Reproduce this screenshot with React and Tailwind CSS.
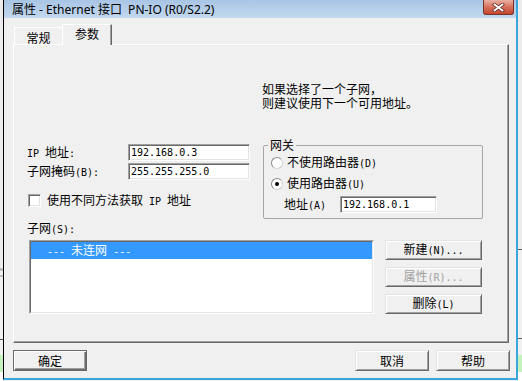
import React from "react";

// half-width latin text, close to the 6px advance of the old bitmap font
const M = ({ children }) => (
  <span className="font-['DejaVu_Sans_Mono',monospace] text-[10px]">{children}</span>
);

const sunken =
  "border border-t-[#a0a0a0] border-l-[#a0a0a0] border-b-white border-r-white shadow-[inset_1px_1px_0_#696969,inset_-1px_-1px_0_#e3e3e3]";

const Field = ({ value, className }) => (
  <div className={`h-[17px] bg-white flex items-center pl-[2px] ${sunken} ${className}`}>
    <M>{value}</M>
  </div>
);

const Btn = ({ children, disabled, className }) => (
  <div
    className={`flex items-center justify-center bg-[#f0f0f0] border border-t-[#e3e3e3] border-l-[#e3e3e3] border-b-[#696969] border-r-[#696969] shadow-[inset_1px_1px_0_white,inset_-1px_-1px_0_#a0a0a0] ${
      disabled ? "text-[#a0a0a0]" : "text-black"
    } ${className}`}
  >
    <span>{children}</span>
  </div>
);

const Radio = ({ checked }) => (
  <div className="w-[12px] h-[12px] rounded-full bg-white border border-t-[#8a8a8a] border-l-[#8a8a8a] border-b-[#d0d0d0] border-r-[#d0d0d0] flex items-center justify-center">
    {checked && <div className="w-[4px] h-[4px] rounded-full bg-black" />}
  </div>
);

export default function App() {
  return (
    <div className="w-[522px] h-[381px] overflow-hidden flex bg-[#f0f0f0] font-['Noto_Sans_CJK_SC',sans-serif] text-[12px] leading-[12px] text-black">
      {/* part of the window behind, left */}
      <div className="w-[3px] flex flex-col">
        <div className="h-[268px] bg-[#ececec]" />
        <div className="h-[3px] bg-[#bdbdbd]" />
        <div className="h-[4px]" />
        <div className="h-[2px] bg-[#bdbdbd]" />
        <div className="h-[62px]" />
        <div className="h-px bg-[#505050]" />
        <div className="h-[15px]" />
        <div className="h-[17px] bg-[#c4f2bc]" />
        <div className="flex-1 bg-white" />
      </div>

      {/* dialog */}
      <div className="w-[515px] h-[380px] flex flex-col border-l border-l-black border-r-2 border-r-[#3aa6de] border-b-2 border-b-[#3aa6de]">
        {/* title bar */}
        <div className="h-[18px] flex items-start bg-linear-to-b from-[#a9c5e5] to-[#c2d8ef] pr-[2px]">
          <div className="flex-1 pl-[8px] pt-[3px] whitespace-pre font-['Noto_Sans','Noto_Sans_CJK_SC',sans-serif] text-[12px] leading-[13px]">
            属性 - Ethernet 接口  PN-IO (R0/S2.2)
          </div>
          <div className="w-[31px] h-[15px] rounded-b-[3px] border border-t-0 border-[#7a3328] bg-linear-to-b from-[#eab1a4] via-[#d6705b] to-[#c4452f] flex items-center justify-center">
            <svg width="13" height="9" viewBox="0 0 13 9">
              <path d="M2.5 1.5 L10.5 7.5 M10.5 1.5 L2.5 7.5" stroke="#5b2a24" strokeWidth="3.4" strokeLinecap="square" />
              <path d="M2.5 1.5 L10.5 7.5 M10.5 1.5 L2.5 7.5" stroke="white" strokeWidth="1.8" strokeLinecap="square" />
            </svg>
          </div>
        </div>

        {/* tabs */}
        <div className="mt-[6px] h-[20px] flex items-end pl-[10px]">
          <div className="w-[48px] h-[17px] border-t border-l border-white flex justify-center pt-[4px]">
            常规
          </div>
          <div className="relative z-10 w-[50px] h-[21px] -mb-px bg-[#f0f0f0] border-t border-l border-t-white border-l-white border-r border-r-[#696969] shadow-[inset_-1px_0_0_#a0a0a0] flex justify-center pt-[3px]">
            参数
          </div>
        </div>

        {/* tab page */}
        <div className="ml-[9px] w-[496px] h-[299px] border border-t-white border-l-white border-r-[#696969] border-b-[#696969] shadow-[inset_-1px_-1px_0_#a0a0a0] flex flex-col">
          <div className="mt-[37px] ml-[248px] leading-[14px]">
            <div>如果选择了一个子网，</div>
            <div>则建议使用下一个可用地址。</div>
          </div>

          <div className="mt-[29px] flex">
            <div className="ml-[13px] w-[236px] flex flex-col">
              <div className="mt-[5px] h-[17px] flex items-center">
                <div className="w-[101px]">
                  <M>IP </M>地址<M>:</M>
                </div>
                <Field value="192.168.0.3" className="w-[122px]" />
              </div>
              <div className="mt-[2px] h-[17px] flex items-center">
                <div className="w-[101px]">
                  子网掩码<M>(B):</M>
                </div>
                <Field value="255.255.255.0" className="w-[122px]" />
              </div>
              <div className="mt-[14px] h-[13px] flex items-center pl-px">
                <div className={`w-[13px] h-[13px] bg-white ${sunken}`} />
                <div className="ml-[6px]">
                  使用不同方法获取<M> IP </M>地址
                </div>
              </div>
            </div>

            <fieldset className="w-[220px] border border-[#a6a6a6] rounded-[2px]">
              <legend className="ml-[4px] px-[2px] leading-[12px]">网关</legend>
              <div className="pl-[7px] pb-[5px] flex flex-col">
                <div className="mt-[6px] h-[12px] flex items-center gap-[4px]">
                  <Radio />
                  <div>
                    不使用路由器<M>(D)</M>
                  </div>
                </div>
                <div className="mt-[9px] h-[12px] flex items-center gap-[4px]">
                  <Radio checked />
                  <div>
                    使用路由器<M>(U)</M>
                  </div>
                </div>
                <div className="mt-[6px] h-[17px] flex items-center pl-[13px]">
                  <div className="w-[56px]">
                    地址<M>(A)</M>
                  </div>
                  <Field value="192.168.0.1" className="w-[97px]" />
                </div>
              </div>
            </fieldset>
          </div>

          <div className="mt-[3px] ml-[13px]">
            子网<M>(S):</M>
          </div>

          <div className="mt-[4px] ml-[15px] flex">
            <div className="w-[345px] h-[74px] border border-t-[#a0a0a0] border-l-[#a0a0a0] border-b-white border-r-white">
              <div className="h-full bg-white border border-t-[#696969] border-l-[#696969] border-b-[#e3e3e3] border-r-[#e3e3e3]">
                <div className="h-[17px] bg-[#3399ff] text-white flex items-center pl-[16px]">
                  <span>
                    <M>--- </M>未连网<M> ---</M>
                  </span>
                </div>
              </div>
            </div>
            <div className="ml-[11px] flex flex-col gap-[7px]">
              <Btn className="w-[97px] h-[20px]">
                新建<M>(N)...</M>
              </Btn>
              <Btn disabled className="w-[97px] h-[20px]">
                属性<M>(R)...</M>
              </Btn>
              <Btn className="w-[97px] h-[20px]">
                删除<M>(L)</M>
              </Btn>
            </div>
          </div>
        </div>

        {/* dialog buttons */}
        <div className="mt-[7px] flex pl-[9px] pr-[6px] gap-[7px]">
          <div className="w-[74px] h-[21px] flex items-center justify-center bg-[#f0f0f0] border border-[#696969] shadow-[inset_1px_1px_0_white,inset_-1px_-1px_0_#696969,inset_-2px_-2px_0_#a0a0a0]">
            确定
          </div>
          <div className="flex-1" />
          <Btn className="w-[74px] h-[21px]">取消</Btn>
          <Btn className="w-[74px] h-[21px]">帮助</Btn>
        </div>
      </div>

      {/* part of the window behind, right */}
      <div className="flex-1 flex flex-col">
        <div className="h-[249px] bg-[#ececec]" />
        <div className="h-px bg-[#606060]" />
        <div className="h-[88px]" />
        <div className="h-px bg-[#606060]" />
        <div className="h-[16px]" />
        <div className="h-[17px] bg-[#c4f2bc]" />
        <div className="flex-1 bg-white" />
      </div>
    </div>
  );
}
